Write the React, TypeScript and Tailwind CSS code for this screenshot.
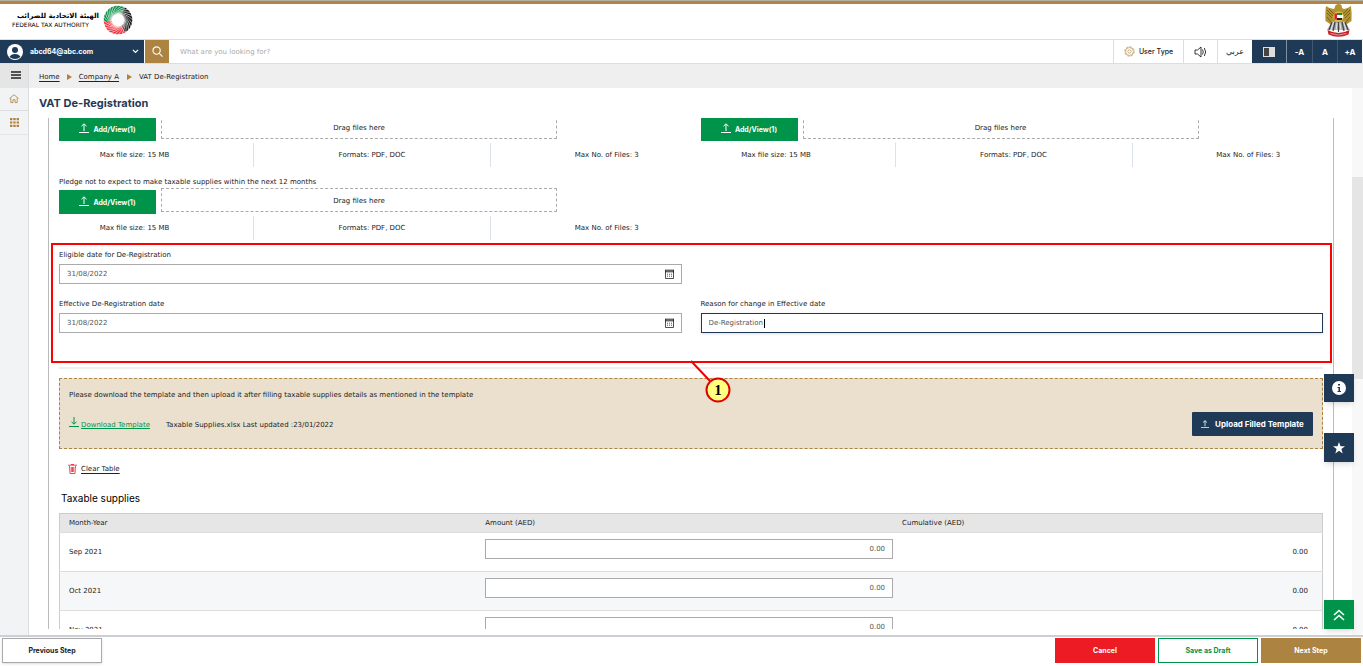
import type { ReactNode } from "react"

const months = ["Sep 2021", "Oct 2021", "Nov 2021"]

function ArrowIcon({ down = false, className = "" }: { down?: boolean; className?: string }) {
  return (
    <svg viewBox="0 0 10 10" className={className} fill="none" stroke="currentColor" strokeWidth="1">
      <path d={down ? "M5 0V7M2.5 4.8L5 7.2L7.5 4.8" : "M5 8V1M2.5 3.2L5 0.8L7.5 3.2"} />
      <path d="M0 9.5H10" />
    </svg>
  )
}

function CalendarIcon() {
  return (
    <svg viewBox="0 0 9 10" className="w-[9px] h-[10px]" fill="none" stroke="#222" strokeWidth="0.8">
      <path d="M0.5 1V9.5H8.5V1" />
      <path d="M0 1.2H9M0 2.8H9" strokeWidth="1" />
      <path d="M2 5.2H7.5M2 7.2H7.5" strokeDasharray="1 1" />
    </svg>
  )
}

function RingLogo() {
  return (
    <svg viewBox="-15 -15 30 30" className="w-[30px] h-[30px]" fill="none">
      <circle r="10.300" stroke="#0d9048" strokeWidth="8" pathLength="360" strokeDasharray="125 235" transform="rotate(175)" />
      <circle r="10.300" stroke="#151515" strokeWidth="8" pathLength="360" strokeDasharray="120 240" transform="rotate(-60)" />
      <circle r="10.300" stroke="#f0303c" strokeWidth="8" pathLength="360" strokeDasharray="115 245" transform="rotate(60)" />
      {Array.from({ length: 24 }, (_, i) => (
        <path key={i} d="M-6 -1.500Q-5 -9 4 -14.500" stroke="#fff" strokeWidth="0.600" transform={`rotate(${i * 15})`} />
      ))}
    </svg>
  )
}

function Emblem() {
  return (
    <svg viewBox="0 0 27 33" className="w-[27px] h-[33px]">
      <path d="M1 2Q4 4.500 9 5L10 3Q10 0 14 0Q17 0 17 4L19 5Q23 4.500 26 2Q27 9 26.500 17L22 20H5L0.500 17Q0 8 1 2Z" fill="#b3932f" />
      <path d="M2 6L8 12M2 9L7 14M4 5L9 10M25 6L19 12M25 9L20 14M23 5L18 10M2 13L6 18M25 13L21 18" stroke="#6b5520" strokeWidth="0.8" />
      <path d="M7 17L2 26H25L20 17Z" fill="#a9a9a9" />
      <path d="M7 18L4 26M10 18L8 27M13.500 18V28M17 18L19 27M20 18L23 26" stroke="#444" strokeWidth="1.200" />
      <path d="M8.500 18L6 26M12 19L11 27M15 19L16 27M18.500 18L21 26" stroke="#f4f4f4" strokeWidth="0.8" />
      <circle cx="13.500" cy="12.500" r="5.300" fill="#d9b94f" />
      <path d="M9.500 9.500H12V15.500H9.500Z" fill="#d8232a" />
      <path d="M12 9H17V11H12Z" fill="#128a46" />
      <path d="M12 11H18V14H12Z" fill="#fff" />
      <path d="M12 14H17V16H12Z" fill="#222" />
      <path d="M2.500 26Q13.500 32 24.500 26L23.500 30.500Q13.500 35 3.500 30.500Z" fill="#c8202a" />
      <path d="M5.500 29.500Q13.500 32.500 21.500 29.500" stroke="#eab5b5" strokeWidth="0.8" fill="none" />
    </svg>
  )
}

function UploadBlock() {
  return (
    <div>
      <div className="flex items-start gap-[5px]">
        <button className="mt-[2px] w-[97px] h-6 pt-[2px] bg-[#00944a] text-white font-bold font-['Inter',sans-serif] flex items-center justify-center gap-1">
          <ArrowIcon className="w-[10px] h-[10px] mb-1" />
          Add/View(1)
        </button>
        <div className="w-[396px] h-6 pt-px border border-dashed border-[#aaa] flex items-center justify-center">
          Drag files here
        </div>
      </div>
      <div className="flex mt-[2px] h-6 leading-[24px] text-center">
        <div className="w-[194px] pr-[43px]">Max file size: 15 MB</div>
        <div className="w-[238px] border-x border-[#dbe2ec]">Formats: PDF, DOC</div>
        <div className="flex-1 pl-[41px]">Max No. of Files: 3</div>
      </div>
    </div>
  )
}

function DateField({ id, label }: { id: string; label: string }) {
  return (
    <div>
      <label htmlFor={id} className="block leading-[18px]">{label}</label>
      <div className="flex items-center h-5 border border-[#aaa] pr-[7px]">
        <input id={id} defaultValue="31/08/2022" className="flex-1 min-w-0 px-[7px] text-[#555] outline-none" />
        <button aria-label="Open calendar"><CalendarIcon /></button>
      </div>
    </div>
  )
}

function ToolCell({ children, className = "" }: { children: ReactNode; className?: string }) {
  return <button className={`h-full flex items-center justify-center ${className}`}>{children}</button>
}

export default function App() {
  return (
    <div className="h-screen flex flex-col bg-white text-[#222] text-[7px] leading-[12px] font-['DejaVu_Sans',sans-serif] overflow-hidden">
      <header className="shrink-0 h-[39px] border-t border-[#b5b0a4]">
        <div className="h-[3px] bg-[#b08642]" />
        <div className="flex items-start justify-between pl-3 pr-[11px]">
          <div className="flex items-center gap-1 pt-px">
            <div className="w-[87px] whitespace-nowrap text-black">
              <p dir="rtl" className="text-[7px] leading-[9px] font-bold">الهيئة الاتحادية للضرائب</p>
              <p className="text-[6px] leading-[8px]">FEDERAL TAX AUTHORITY</p>
            </div>
            <RingLogo />
          </div>
          <Emblem />
        </div>
      </header>

      <nav className="shrink-0 h-[25px] flex border-y border-[#ddd]">
        <button className="w-36 bg-[#1f3a57] text-white font-bold font-['Inter',sans-serif] flex items-center pl-[7px] pr-[5px]">
          <svg viewBox="0 0 16 16" className="w-4 h-4 mr-[7px]">
            <circle cx="8" cy="8" r="8" fill="#fff" />
            <circle cx="8" cy="6" r="3" fill="#1f3a57" />
            <path d="M2.500 13Q4 10 8 10T13.500 13Q11 15 8 15T2.500 13" fill="#1f3a57" />
          </svg>
          abcd64@abc.com
          <svg viewBox="0 0 8 6" className="w-[7px] ml-auto" fill="none" stroke="#fff" strokeWidth="1.400"><path d="M1 1L4 4L7 1" /></svg>
        </button>
        <button aria-label="Search" className="w-6 ml-px bg-[#ac8340] flex items-center justify-center">
          <svg viewBox="0 0 12 12" className="w-[11px]" fill="none" stroke="#fff" strokeWidth="1.200"><circle cx="5" cy="5" r="4" /><path d="M8 8L11.500 11.500" /></svg>
        </button>
        <input aria-label="Search" placeholder="What are you looking for?" className="flex-1 min-w-0 px-[11px] placeholder:text-[#aaa] outline-none" />
        <ToolCell className="w-[70px] border-l border-[#ddd] font-medium font-['Inter',sans-serif] gap-1">
          <svg viewBox="0 0 12 12" className="w-[11px]" fill="none" stroke="#ac8340" strokeWidth="0.700"><circle cx="6" cy="6" r="5.200" strokeDasharray="2.500 1.500" /><circle cx="6" cy="6" r="4.300" /><circle cx="6" cy="6" r="1.800" /></svg>
          User Type
        </ToolCell>
        <ToolCell className="w-[34px] border-l border-[#ddd]">
          <svg viewBox="0 0 13 12" className="w-[13px]" fill="none" stroke="#222" strokeWidth="0.900"><path d="M1 4H3.500L7 1V11L3.500 8H1ZM8.500 3.500Q10 6 8.500 8.500M10.300 2Q13 6 10.300 10" /></svg>
        </ToolCell>
        <ToolCell className="w-[35px] border-l border-[#ddd] text-[8px]">عربي</ToolCell>
        <div className="flex bg-[#1f3a57] text-white text-[8px] font-bold font-['Inter',sans-serif] mr-px">
          <ToolCell className="w-[34px]">
            <svg viewBox="0 0 12 10" className="w-3"><path d="M0 0H12V10H0Z" fill="#ddd" /><path d="M1 1H6V9H1Z" fill="#444" /></svg>
          </ToolCell>
          <ToolCell className="w-[26px] border-l border-[#8291a2]">-A</ToolCell>
          <ToolCell className="w-[25px] border-l border-[#43586f]">A</ToolCell>
          <ToolCell className="w-[25px] border-l border-[#43586f]">+A</ToolCell>
        </div>
      </nav>

      <div className="flex flex-1 min-h-0">
        <aside className="w-[29px] shrink-0 bg-[#f2f3f5] border-r border-[#ddd]">
          <button aria-label="Menu" className="w-full h-6 pb-[2px] bg-[#e5e5e5] flex items-center justify-center pl-[3px]">
            <svg viewBox="0 0 10 8" className="w-[10px]" stroke="#222" strokeWidth="1.400"><path d="M0 1H10M0 4H10M0 7H10" /></svg>
          </button>
          <a href="#home" aria-label="Home" className="h-[23px] flex items-center justify-center border-b border-[#ddd]">
            <svg viewBox="0 0 11 10" className="w-[10px]" fill="none" stroke="#ac8340" strokeWidth="0.900"><path d="M0.500 5L5.500 0.800L10.500 5M2 4.500V9.500H4.300V6.300H6.700V9.500H9V4.500" /></svg>
          </a>
          <a href="#services" aria-label="Services" className="h-6 flex items-center justify-center border-b border-[#e5e5e5]">
            <svg viewBox="0 0 9 9" className="w-[9px]" stroke="#ac8340" strokeWidth="2.200" strokeDasharray="2.400 0.900"><path d="M0 1.200H9M0 4.500H9M0 7.800H9" /></svg>
          </a>
        </aside>

        <div className="flex-1 min-w-0 flex flex-col">
          <div className="shrink-0 h-6 bg-[#efefef] flex items-center gap-[7px] pt-px pl-[10px]">
            <a href="#home" className="underline underline-offset-2">Home</a>
            <span className="border-y-[3px] border-y-transparent border-l-[5px] border-l-[#ac8340]" />
            <a href="#company" className="underline underline-offset-2">Company A</a>
            <span className="ml-px border-y-[3px] border-y-transparent border-l-[5px] border-l-[#ac8340]" />
            <span>VAT De-Registration</span>
          </div>

          <div className="flex flex-1 min-h-0">
            <main className="flex-1 min-w-0 flex flex-col pl-[19px] pr-[18px] pb-[6px]">
              <h1 className="shrink-0 h-[30px] leading-[30px] -ml-[9px] text-[11px] font-bold font-['Inter',sans-serif] text-[#1f3a57]">VAT De-Registration</h1>

              <div className="flex-1 min-h-0 overflow-hidden border-x border-[#bbb] px-[10px]">
                <div className="-mt-[3px] grid grid-cols-2 gap-x-[19px]">
                  <UploadBlock />
                  <UploadBlock />
                  <div>
                    <p className="h-[21px] pt-[9px]">Pledge not to expect to make taxable supplies within the next 12 months</p>
                    <UploadBlock />
                  </div>
                </div>

                <section className="relative mt-[3px] h-[120px] pt-[3px]">
                  <div className="grid grid-cols-2 gap-x-[19px] gap-y-[11px]">
                    <DateField id="eligible" label="Eligible date for De-Registration" />
                    <div />
                    <DateField id="effective" label="Effective De-Registration date" />
                    <div className="relative">
                      <label htmlFor="reason" className="block leading-[18px]">Reason for change in Effective date</label>
                      <input id="reason" defaultValue="De-Registration" className="block w-full h-5 px-[7px] border border-[#1f3a57] text-[#555] shadow outline-none" />
                      <span className="absolute left-[63px] bottom-[5px] w-px h-[9px] bg-black" />
                    </div>
                  </div>
                  <div className="absolute inset-y-0 -left-2 -right-[9px] border-2 border-[#f00] pointer-events-none">
                    <svg viewBox="2 -2 40 42" className="absolute left-1/2 top-full w-10 h-[42px] overflow-visible">
                      <path d="M1 -2L20 18" stroke="#e00" strokeWidth="2" />
                      <circle cx="28" cy="27" r="11.500" fill="#ffff80" stroke="#d00" strokeWidth="2" />
                      <text x="28" y="32" textAnchor="middle" fontSize="15" fontWeight="bold" fontFamily="Liberation Serif, serif">1</text>
                    </svg>
                  </div>
                </section>

                <div className="mt-1 border-t-2 border-[#eee]" />

                <section className="mt-[9px] h-[71px] px-[9px] bg-[#ebe0cd] border border-dashed border-[#ac8340] flex justify-between">
                  <div>
                    <p className="mt-[10px]">Please download the template and then upload it after filling taxable supplies details as mentioned in the template</p>
                    <div className="mt-4 flex items-center">
                      <a href="#template" className="flex items-center text-[#00944a]">
                        <ArrowIcon down className="w-[10px] h-[10px] mr-[2px] mb-[6px]" />
                        <span className="underline underline-offset-1">Download Template</span>
                      </a>
                      <span className="ml-4">Taxable Supplies.xlsx Last updated :23/01/2022</span>
                    </div>
                  </div>
                  <button className="mt-[33px] w-[121px] h-6 bg-[#1f3a57] text-white text-[8px] font-bold font-['Inter',sans-serif] rounded-[1px] flex items-center justify-center gap-[6px]">
                    <ArrowIcon className="w-2 h-2" />
                    Upload Filled Template
                  </button>
                </section>

                <button className="mt-[14px] ml-[9px] flex items-center gap-1">
                  <svg viewBox="0 0 9 10" className="w-[9px] h-[10px]" fill="none" stroke="#ed1c24" strokeWidth="0.800"><path d="M0 1.200H9M3 0.500H6M1.500 2L2 9.500H7L7.500 2M3.300 3V8M4.500 3V8M5.700 3V8" /></svg>
                  <span className="underline underline-offset-2">Clear Table</span>
                </button>

                <h2 className="mt-4 ml-[2px] mb-2 text-[10px] leading-[14px] font-['Inter',sans-serif] text-black">Taxable supplies</h2>

                <table className="w-full table-fixed border border-[#ccc] border-collapse text-left">
                  <thead>
                    <tr className="h-[19px] bg-[#e6e6e6]">
                      <th className="w-[33%] pl-[9px] font-normal">Month-Year</th>
                      <th className="w-[33%] pl-[9px] font-normal">Amount (AED)</th>
                      <th className="pl-[9px] font-normal">Cumulative (AED)</th>
                    </tr>
                  </thead>
                  <tbody>
                    {months.map((month) => (
                      <tr key={month} className="h-[39px] border-t border-[#ddd] even:bg-[#f6f7f9]">
                        <td className="pl-[9px]">{month}</td>
                        <td className="pl-[9px] pb-[6px]">
                          <input aria-label={`Amount for ${month}`} defaultValue="0.00" className="block w-full h-5 px-[7px] text-right bg-white border border-[#aaa] text-[#555] outline-none" />
                        </td>
                        <td className="pr-[14px] text-right">0.00</td>
                      </tr>
                    ))}
                  </tbody>
                </table>
              </div>
            </main>
            <div className="w-[11px] shrink-0 bg-[#f8f8f8] flex flex-col">
              <div className="h-[37%] mt-[89px] bg-[#e5e5e5]" />
            </div>
          </div>
        </div>
      </div>

      <footer className="shrink-0 h-[31px] border-t-2 border-[#ccd0d4] flex items-start gap-[3px] pt-px px-[2px] font-bold font-['Inter',sans-serif]">
        <button className="w-[100px] h-[25px] pt-px mr-auto border border-[#aaa] shadow-sm">Previous Step</button>
        <button className="w-[100px] h-[25px] bg-[#ed1c24] text-white">Cancel</button>
        <button className="w-[100px] h-[25px] pt-px border border-[#00944a] text-[#00944a]">Save as Draft</button>
        <button className="w-[100px] h-[25px] bg-[#ac8340] text-white">Next Step</button>
      </footer>

      <button aria-label="Information" className="fixed right-[9px] top-[374px] w-[30px] h-7 bg-[#1f3a57] shadow-md flex items-center justify-center">
        <svg viewBox="0 0 14 14" className="w-[14px]"><circle cx="7" cy="7" r="7" fill="#fff" /><path d="M6 3H8V4.500H6ZM5.500 6H8V10H9V11H5.500V10H6.500V7H5.500Z" fill="#1f3a57" /></svg>
      </button>
      <button aria-label="Favourites" className="fixed right-[9px] top-[433px] w-[30px] h-[29px] bg-[#1f3a57] shadow-md flex items-center justify-center">
        <svg viewBox="0 0 12 12" className="w-3" fill="#fff"><path d="M6 0L7.500 4.300H12L8.400 7L9.700 11.500L6 8.800L2.300 11.500L3.600 7L0 4.300H4.500Z" /></svg>
      </button>
      <button aria-label="Back to top" className="fixed right-[9px] bottom-[37px] w-[30px] h-[29px] bg-[#00944a] shadow-md flex items-center justify-center">
        <svg viewBox="0 0 12 12" className="w-3" fill="none" stroke="#fff" strokeWidth="1.600"><path d="M1 6L6 1.500L11 6M1 11L6 6.500L11 11" /></svg>
      </button>
    </div>
  )
}
